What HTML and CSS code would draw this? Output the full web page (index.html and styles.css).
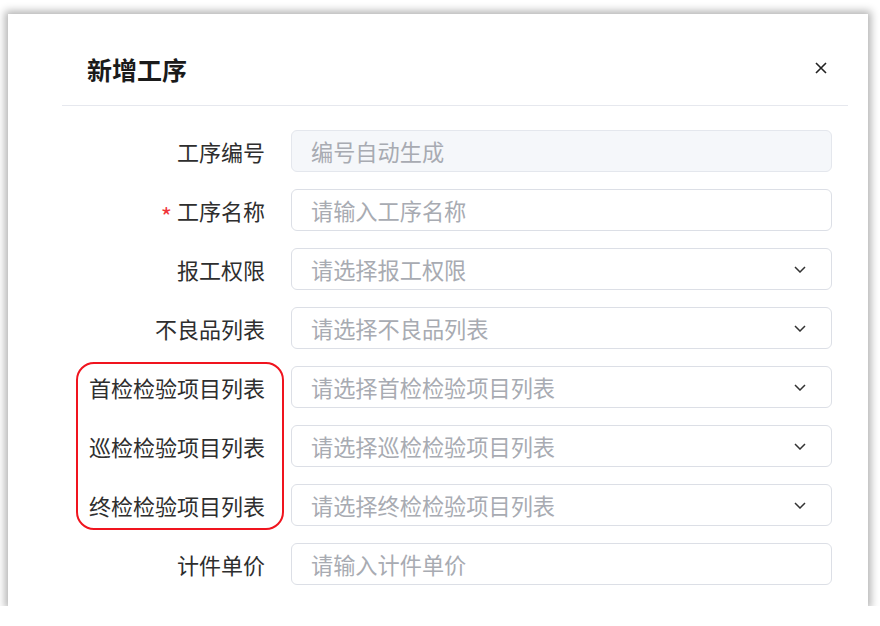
FILE: index.html
```html
<!DOCTYPE html>
<html lang="zh-CN">
<head>
<meta charset="utf-8">
<title>新增工序</title>
<link rel="stylesheet" href="styles.css">
</head>
<body>
<div class="dialog">
  <div class="header">
    <div class="title">新增工序</div>
    <svg class="close" width="12" height="12" viewBox="0 0 12 12"><path d="M1 1L11 11M11 1L1 11" stroke="#222" stroke-width="1.6" fill="none"/></svg>
  </div>
  <div class="form">
    <div class="row"><label class="label">工序编号</label><div class="field disabled"><span class="ph">编号自动生成</span></div></div>
    <div class="row"><label class="label"><span class="req">*</span>工序名称</label><div class="field"><span class="ph">请输入工序名称</span></div></div>
    <div class="row"><label class="label">报工权限</label><div class="field select"><span class="ph">请选择报工权限</span><svg class="chev" width="12" height="7" viewBox="0 0 12 7"><path d="M1 1L6 6L11 1" stroke="#333" stroke-width="1.5" fill="none"/></svg></div></div>
    <div class="row"><label class="label">不良品列表</label><div class="field select"><span class="ph">请选择不良品列表</span><svg class="chev" width="12" height="7" viewBox="0 0 12 7"><path d="M1 1L6 6L11 1" stroke="#333" stroke-width="1.5" fill="none"/></svg></div></div>
    <div class="row"><label class="label">首检检验项目列表</label><div class="field select"><span class="ph">请选择首检检验项目列表</span><svg class="chev" width="12" height="7" viewBox="0 0 12 7"><path d="M1 1L6 6L11 1" stroke="#333" stroke-width="1.5" fill="none"/></svg></div></div>
    <div class="row"><label class="label">巡检检验项目列表</label><div class="field select"><span class="ph">请选择巡检检验项目列表</span><svg class="chev" width="12" height="7" viewBox="0 0 12 7"><path d="M1 1L6 6L11 1" stroke="#333" stroke-width="1.5" fill="none"/></svg></div></div>
    <div class="row"><label class="label">终检检验项目列表</label><div class="field select"><span class="ph">请选择终检检验项目列表</span><svg class="chev" width="12" height="7" viewBox="0 0 12 7"><path d="M1 1L6 6L11 1" stroke="#333" stroke-width="1.5" fill="none"/></svg></div></div>
    <div class="row"><label class="label">计件单价</label><div class="field"><span class="ph">请输入计件单价</span></div></div>
  </div>
  <div class="highlight"></div>
</div>
</body>
</html>
```
FILE: styles.css
```css
html, body {
  margin: 0;
  padding: 0;
  background: #fff;
}
body {
  font-family: "Noto Sans CJK SC", "Noto Sans", sans-serif;
  padding: 14px 0 0 8px;
}
.dialog {
  position: relative;
  width: 860px;
  height: 592px;
  box-sizing: border-box;
  background: #fff;
  box-shadow: 0 0 8px 3px rgba(0, 0, 0, 0.3);
  padding: 0 20px 0 54px;
}
.header {
  height: 92px;
  border-bottom: 1px solid #e6e8ee;
  display: flex;
  align-items: center;
  justify-content: space-between;
  padding: 20px 21px 0 25px;
  box-sizing: border-box;
}
.title {
  font-size: 25px;
  font-weight: 700;
  color: #1a1a1a;
  line-height: 1;
}
.close {
  margin-top: -4px;
  display: block;
}
.form {
  padding-top: 24px;
  display: flex;
  flex-direction: column;
  gap: 17px;
}
.row {
  display: flex;
  align-items: center;
  height: 42px;
}
.label {
  width: 229px;
  box-sizing: border-box;
  padding-right: 26px;
  text-align: right;
  font-size: 22px;
  color: #2e2e2e;
  line-height: 1;
  white-space: nowrap;
}
.req {
  color: #f0343a;
  font-size: 24px;
  margin-right: 5px;
  position: relative;
  top: 6px;
}
.field {
  width: 541px;
  height: 42px;
  box-sizing: border-box;
  border: 1px solid #dcdfe6;
  border-radius: 6px;
  padding: 0 19px;
  display: flex;
  align-items: center;
  justify-content: space-between;
  background: #fff;
}
.field.disabled {
  background: #f5f7fa;
  border-color: #e4e7ed;
}
.ph {
  font-size: 22.2px;
  color: #a8abb2;
  line-height: 1;
  white-space: nowrap;
}
.chev {
  display: block;
  margin-right: 6px;
}
.highlight {
  position: absolute;
  left: 68px;
  top: 348px;
  width: 208px;
  height: 168px;
  box-sizing: border-box;
  border: 2px solid #f0141e;
  border-radius: 18px;
}
```
